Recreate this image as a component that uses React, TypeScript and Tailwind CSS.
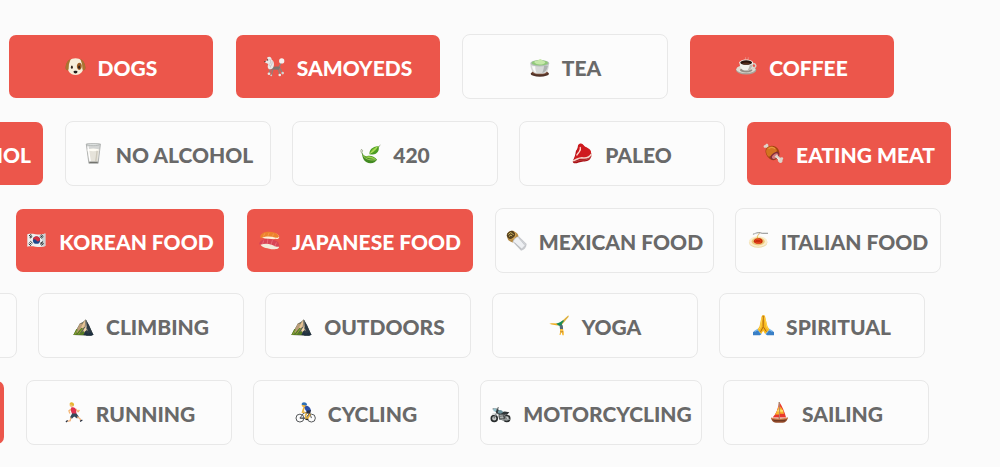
import React, { useState } from 'react';

interface IconProps {
  children: React.ReactNode;
}

const Icon: React.FC<IconProps> = ({ children }) => (
  <svg className="h-[21px] w-[21px] shrink-0" viewBox="0 0 64 64" fill="none" aria-hidden="true">
    {children}
  </svg>
);

const DogIcon = () => (
  <Icon>
    <path d="M17 10C8 12 1 28 2 38c2 7 10 7 13 1l6-24zM47 10c9 2 16 18 15 28-2 7-10 7-13 1l-6-24z" fill="#9c6227" />
    <path d="M32 7c-15 0-25 10-25 23 0 15 8 28 25 28s25-13 25-28C57 17 47 7 32 7z" fill="#f6efdb" />
    <path d="M17 10C8 12 1 28 2 38c1 6 7 7 9 2l1-15zM47 10c9 2 16 18 15 28-1 6-7 7-9 2l-1-15z" fill="#ab7330" />
    <path d="M38 24c4-6 12-5 13 4 1 9-4 16-9 14-5-2-8-11-4-18z" fill="#9a5a22" />
    <ellipse cx="21" cy="34" rx="3" ry="5" fill="#30241d" />
    <ellipse cx="43" cy="34" rx="3" ry="5" fill="#30241d" />
    <path d="M26 47c0-3 12-3 12 0 0 4-3 6-6 6s-6-2-6-6z" fill="#1d1b1b" />
  </Icon>
);

const PoodleIcon = () => (
  <Icon>
    <path d="M46 34l8-18M20 36l-4 18M27 38l-4 20M44 38l4 19M48 36l8 16" stroke="#8d817b" strokeWidth="4" />
    <path d="M22 30c8 5 18 0 27 4l-4 8-22-1z" fill="#7d7470" />
    <path d="M10 4c7-5 14 0 13 7 7 4 8 11 7 18-1 9-7 13-15 11-5-3-4-11-2-16L3 20l1-5 7-2z" fill="#e9e8e8" />
    <path d="M17 9c4 4 4 10 1 15m7-8c0 6-1 11-5 15M14 27c4 0 6 3 6 8" stroke="#b8b6b8" strokeWidth="2" />
    <circle cx="11" cy="12" r="2" fill="#312c2b" />
    <circle cx="3" cy="17" r="2" fill="#312c2b" />
    <circle cx="54" cy="15" r="8" fill="#f4f1f0" />
    <circle cx="15" cy="54" r="4" fill="#e7e4e2" />
    <circle cx="22" cy="59" r="3" fill="#cfcbc8" />
    <circle cx="48" cy="58" r="4" fill="#f0edeb" />
    <circle cx="57" cy="52" r="4" fill="#d6d1ce" />
  </Icon>
);

const TeaIcon = () => (
  <Icon>
    <ellipse cx="33" cy="54" rx="28" ry="9" fill="#513329" />
    <ellipse cx="33" cy="50" rx="24" ry="7" fill="#7a4c37" />
    <path d="M4 23c0 19 8 31 20 31h18c12 0 19-12 19-31z" fill="#d7d9d8" />
    <path d="M9 31c3 12 7 18 14 21-3-7-4-14-4-21z" fill="#fafafa" />
    <path d="M46 30c-1 9-3 16-6 22 9-1 15-9 18-22z" fill="#aeb2b2" />
    <ellipse cx="33" cy="22" rx="29" ry="10" fill="#b7bebd" />
    <ellipse cx="33" cy="21" rx="25" ry="8" fill="#91c97b" />
    <path d="M16 19c4-8 10-1 14-8 8-6 8 4 16 5 5 2 5 6-2 8-9 3-22 3-28-5z" fill="#c5e8a9" />
  </Icon>
);

const CoffeeIcon = () => (
  <Icon>
    <path d="M28 13c-3-4 4-5 1-9m8 9c-4-5 5-6 0-9" stroke="#e9aaa2" strokeWidth="2" />
    <ellipse cx="31" cy="43" rx="31" ry="13" fill="#aaa49b" />
    <ellipse cx="30" cy="40" rx="29" ry="12" fill="#dedbd2" />
    <ellipse cx="31" cy="43" rx="19" ry="7" fill="#958e85" />
    <path d="M49 25c11-6 15 7 7 11-4 3-9 4-12 3" stroke="#d4d0c9" strokeWidth="4" />
    <path d="M11 20c0 14 6 24 15 24h11c9 0 14-10 15-24z" fill="#f2f1ed" />
    <path d="M42 25c-1 9-4 16-8 19 9 1 15-8 17-19z" fill="#bbb6af" />
    <ellipse cx="31" cy="20" rx="21" ry="9" fill="#f4f2ed" />
    <ellipse cx="31" cy="20" rx="18" ry="7" fill="#27130d" />
    <path d="M18 23c7-4 19-4 26 0-7 4-19 4-26 0z" fill="#58301e" />
  </Icon>
);

const MilkIcon = () => (
  <Icon>
    <path d="M10 3h43l-7 59H18z" fill="#d3d5d4" stroke="#b0b2b1" strokeWidth="3" />
    <path d="M13 20h37l-6 36H20z" fill="#e6e3da" />
    <ellipse cx="31" cy="21" rx="18" ry="4" fill="#fffdf5" />
    <path d="M15 10l7 46" stroke="#fff" strokeWidth="4" />
    <path d="M43 24l-4 31" stroke="#cdc9bc" strokeWidth="4" />
    <ellipse cx="31" cy="5" rx="20" ry="3" fill="#e4e7e6" stroke="#a5aaa8" strokeWidth="2" />
    <path d="M19 59h26" stroke="#73736e" strokeWidth="4" />
  </Icon>
);

const LeafIcon = () => (
  <Icon>
    <path d="M54 15c5-3 4-7 8-9M8 34c-4-3-7-10-4-14 3-1 5 3 3 7" stroke="#7d8b65" strokeWidth="2" />
    <path d="M29 34c-1-13 7-22 27-25 5 12-3 26-17 26-4 1-7 0-10-1z" fill="#4b9c24" />
    <path d="M30 32c3-9 12-18 25-22-4 11-13 19-25 22z" fill="#92cf3f" />
    <path d="M6 27c0 20 8 35 26 35 10 0 16-6 20-11-8-11-22-14-31-11C13 41 8 36 6 27z" fill="#438b22" />
    <path d="M7 34c7 13 21 10 43 17-12-11-25-12-33-9z" fill="#9cd24c" />
    <path d="M10 40c10 11 23 13 38 11M31 32c8-6 14-11 22-21" stroke="#c5e47c" strokeWidth="2" />
  </Icon>
);

const SteakIcon = () => (
  <Icon>
    <path d="M22 4c8-4 12 2 17 8 10 5 22 12 20 27-1 12-12 19-25 17-12 1-25 10-30 4-5-5 4-14 5-21 3-8 1-14 6-19 4-5 1-13 7-16z" fill="#a80b12" />
    <path d="M22 3c8-4 12 2 17 8 10 5 23 10 18 23-5 9-18 11-28 10-9 1-16 10-20 7-4-5 2-12 4-18 2-6 0-9 4-14 3-5 0-13 5-16z" fill="#cf1a1e" />
    <path d="M25 12c2 6 1 10-3 15-3 4-6 7-8 11" stroke="#ffd9cf" strokeWidth="4" />
    <path d="M3 54c9-1 16-9 27-9 12 2 24-2 29-11" stroke="#f6d3c7" strokeWidth="5" />
    <path d="M5 57c8 2 16-6 26-5 13 1 23-4 27-11" stroke="#c7655d" strokeWidth="2" />
  </Icon>
);

const MeatIcon = () => (
  <Icon>
    <path d="M7 6c3-7 11-3 9 3l9 10-8 6-7-11C3 17-1 10 4 7z" fill="#dfd4c9" />
    <path d="M11 15c11-12 30-7 36 5 4 8 5 18-1 25-8 9-20 10-28 1C9 38 4 23 11 15z" fill="#a3430f" />
    <path d="M12 17c9-11 24-6 30 4 2 5-5 9-11 13-7 4-11 9-15 7-6-6-9-17-4-24z" fill="#d27420" />
    <path d="M17 18c7-7 15-5 20 0" stroke="#e8963f" strokeWidth="4" />
    <ellipse cx="36" cy="39" rx="15" ry="9" transform="rotate(-38 36 39)" fill="#852d37" />
    <ellipse cx="37" cy="40" rx="11" ry="6" transform="rotate(-38 37 40)" fill="#d57879" />
    <path d="M35 41l7-6 10 10c8-5 13 2 7 7 3 7-7 12-11 6-4-3-3-6-2-8z" fill="#dcd4cb" />
    <path d="M43 45l7 7" stroke="#fffaf1" strokeWidth="3" />
  </Icon>
);

const KoreaIcon = () => (
  <Icon>
    <path d="M4 13c18-5 35 6 55-2v38c-20 8-37-3-55 2z" fill="#edf1f1" />
    <path d="M49 14l10-3v38l-10 2z" fill="#cbd3d4" />
    <circle cx="32" cy="31" r="11" fill="#1b488c" />
    <path d="M21 30c0-15 22-15 22 0-3 6-8 7-11 2-3-4-8-5-11-2z" fill="#d23142" />
    <path d="M9 18l7-5m-5 9 7-5m-6 8 7-5M46 14l7 6m-9-3 7 6m-9-3 7 6M10 38l7 6m-9-2 7 6m-2-14 7 6M44 44l8-6m-6 9 8-6m-11 0 8-6" stroke="#303436" strokeWidth="3" />
  </Icon>
);

const SushiIcon = () => (
  <Icon>
    <path d="M7 17c6-12 47-11 53 0 5 9-3 12-9 10-15 5-31 0-42-4z" fill="#fff0d9" />
    <path d="M4 19C10 0 47 3 59 15c5 7-2 10-11 8-14-5-29-3-40 1-4 0-5-2-4-5z" fill="#ed812c" />
    <path d="M18 10l-5 10M31 8l-4 10M44 11l-3 10" stroke="#f7a55c" strokeWidth="2" />
    <path d="M4 39c10-8 48 0 57 12 1 8-16 9-30 6C17 55 2 50 4 39z" fill="#f3ecdc" />
    <path d="M1 41c2-18 44-20 58-3 6 12 2 15-8 12-14-7-29-12-47-5-3 0-4-2-3-4z" fill="#d84455" />
    <path d="M14 32l-3 11M27 28l-2 15M41 31l-5 15M53 38l-5 12" stroke="#ee7f83" strokeWidth="2" />
  </Icon>
);

const BurritoIcon = () => (
  <Icon>
    <path d="M5 20L23 5c10 1 15 7 15 16L21 38C10 36 2 28 5 20z" fill="#b68b45" />
    <path d="M3 17C2 7 14-1 24 3c9 4 9 15 2 22C16 33 4 27 3 17z" fill="#d7a757" />
    <ellipse cx="15" cy="15" rx="13" ry="11" transform="rotate(-38 15 15)" fill="#57411f" />
    <path d="M7 14l6-6 5 2M9 20l6-5 3 4m0-9 5 5" stroke="#d5c065" strokeWidth="3" />
    <path d="M20 36c3-9 9-15 19-17l24 24c-1 11-7 18-17 20z" fill="#c7c9cd" />
    <path d="M23 35c3-7 7-11 14-14l22 24-11 11z" fill="#eef0f3" />
    <path d="M38 23l20 24M27 39l19 20" stroke="#b2b5bb" strokeWidth="2" />
  </Icon>
);

const PastaIcon = () => (
  <Icon>
    <ellipse cx="31" cy="38" rx="28" ry="16" fill="#ecd9a8" />
    <ellipse cx="31" cy="35" rx="28" ry="16" fill="#faedcc" />
    <ellipse cx="31" cy="35" rx="20" ry="12" fill="#ecc878" />
    <path d="M17 35c2-9 9-11 16-10 8 0 14 6 11 12-3 7-24 7-27-2z" fill="#ca2c0b" />
    <path d="M22 31c4-4 14-4 16 1M23 37c4 4 12 3 16-1" stroke="#f25124" strokeWidth="3" />
    <path d="M29 25c-3-9 5-9 6-17" stroke="#e4b448" strokeWidth="3" />
    <path d="M15 13c15-6 19-6 28-3h18" stroke="#8a8b8a" strokeWidth="3" />
    <path d="M18 11l19 1" stroke="#d9d9d7" strokeWidth="2" />
  </Icon>
);

const MountainIcon = () => (
  <Icon>
    <path d="M1 61l20-35 9-5 9-7 10 18 13 28-9 3z" fill="#5f6352" />
    <path d="M35 21l4-7 10 17 13 29-21 3-7-17z" fill="#2d3a44" />
    <path d="M38 14L25 33 15 58l21-24z" fill="#e5c394" />
    <path d="M21 26L9 49 2 60l15-6 13-27z" fill="#b99c78" />
    <path d="M39 15l-3 23-10 20 17-13z" fill="#f1d5ac" />
    <path d="M40 17l-1 18 6 14" stroke="#6e706d" strokeWidth="3" />
    <path d="M1 61l9-18 4 1-4 14 16-19 4 1-9 18 11-10 4 13z" fill="#567c22" />
    <path d="M5 60l8-14m3 13 12-16" stroke="#91a43c" strokeWidth="3" />
    <path d="M31 61l7-9 9 6 7-6 9 8-7 3z" fill="#1f3040" />
  </Icon>
);

const CartwheelIcon = () => (
  <Icon>
    <path d="M1 27l7-2 23 1 3 3-8 3-18-3z" fill="#edae21" />
    <path d="M32 25L54 5l5-4 1 4-22 26z" fill="#deb03f" />
    <path d="M22 26c6-1 10-3 15-6l7-5 1 4-6 8 1 7-10-1z" fill="#158b58" />
    <path d="M32 31h10l1 14h-9z" fill="#556876" />
    <path d="M34 43h8l3 8 0 11h-4l-3-11-3 10h-3l2-11z" fill="#f6b72f" />
    <circle cx="38" cy="48" r="4" fill="#ffc648" />
    <path d="M35 50c2 2 5 2 7 0" stroke="#804d22" strokeWidth="2" />
  </Icon>
);

const PrayIcon = () => (
  <Icon>
    <path d="M0 52l14-8 12 14-5 4H0zM64 52l-14-8-12 14 5 4h21z" fill="#397fc6" />
    <path d="M5 50l10-6 9 12M59 50l-10-6-9 12" stroke="#79b8ed" strokeWidth="4" />
    <path d="M32 1c-5-2-6 4-7 9l-5 24-6 10 11 14 6-10 6 10 13-14-6-10-6-24c-1-5-1-11-6-9z" fill="#f8b91e" />
    <path d="M31 2v34l-8 15M32 37l9 14" stroke="#ac6512" strokeWidth="3" />
    <path d="M28 7l-5 30-5 7M36 8l6 29 5 7" stroke="#ffd24f" strokeWidth="3" />
  </Icon>
);

const RunnerIcon = () => (
  <Icon>
    <path d="M27 20l-9 7 3 8M39 21l7 9 4-6" stroke="#f4b574" strokeWidth="4" strokeLinejoin="round" />
    <path d="M25 17c7-3 13 0 15 7l1 13H28l-4-10z" fill="#df314e" />
    <circle cx="26" cy="9" r="6" fill="#f6bd73" />
    <path d="M20 7c1-8 12-8 14 1l-3 6-4-6z" fill="#e5b730" />
    <path d="M28 35h13l7 9-5 6-9-6-7 7-6-4z" fill="#344858" />
    <path d="M43 45l8 5 4 7M24 47l-2 10-9 2" stroke="#f1b27b" strokeWidth="4" />
    <path d="M52 59l7-4M14 56l-5 5" stroke="#283243" strokeWidth="4" />
  </Icon>
);

const CyclistIcon = () => (
  <Icon>
    <g stroke="#525557" strokeWidth="3">
      <circle cx="15" cy="49" r="12" />
      <circle cx="50" cy="49" r="12" />
      <path d="M15 49l12-16 18 0-13 17zM50 49L43 28M15 49h17" />
    </g>
    <path d="M28 16l-5 15 8 1M38 30l-6 11 2 12M42 28l3 12-8 12" stroke="#e8b341" strokeWidth="5" />
    <path d="M27 12c10-5 20 2 22 15l-12 6-6-10z" fill="#2a4fa8" />
    <path d="M37 26l12-1-3 11-12-2z" fill="#282e43" />
    <circle cx="27" cy="10" r="6" fill="#f1b541" />
    <path d="M20 8C21-2 34-1 37 8l-4 3z" fill="#2d6fb5" />
    <path d="M32 53h8" stroke="#242628" strokeWidth="4" />
  </Icon>
);

const MotorcycleIcon = () => (
  <Icon>
    <circle cx="13" cy="50" r="9" fill="#c6c9c8" stroke="#292d2e" strokeWidth="5" />
    <circle cx="51" cy="50" r="9" fill="#c6c9c8" stroke="#292d2e" strokeWidth="5" />
    <path d="M12 50l12-25M25 29l8 23h17l-8-16M8 21l14 1 4-6" stroke="#767b7c" strokeWidth="4" />
    <path d="M15 26l9-5 10 10 11-2 14 2-7 8H30l-9-4z" fill="#303638" />
    <path d="M24 27c6-4 13-3 16 4l-7 5-9-2z" fill="#69909b" />
    <path d="M25 39h17l3 13-17 2z" fill="#4c5050" />
    <path d="M29 42l11 1M30 48h11M6 38c7-5 16-3 20 5" stroke="#cfd3d2" strokeWidth="3" />
    <circle cx="15" cy="24" r="5" fill="#95c2cc" />
    <path d="M36 55l24-2" stroke="#999f9f" strokeWidth="4" />
  </Icon>
);

const SailIcon = () => (
  <Icon>
    <path d="M31 0v52" stroke="#815331" strokeWidth="3" />
    <path d="M29 4c-1 17-7 32-18 43h20zM33 2c8 12 15 29 19 45H33z" fill="#e8392c" />
    <path d="M29 15L24 28l-6 10h13V15zM34 13l7 9 5 14H34z" fill="#f8b52e" />
    <path d="M29 21l-5 8h7zM34 22l9 3 1 5H34z" fill="#ffe067" />
    <path d="M6 48c16 5 36 4 52-1-3 12-10 16-18 16H21C12 63 8 57 6 48z" fill="#984d2b" />
    <path d="M7 49c14 5 36 4 50 0" stroke="#dc8b54" strokeWidth="3" />
    <path d="M14 57h36" stroke="#653521" strokeWidth="3" />
  </Icon>
);

interface Interest {
  id: string;
  label?: string;
  icon?: React.FC;
  selected?: boolean;
  width?: string;
}

interface InterestRow {
  inset: string;
  items: Interest[];
}

// Food and drink first, then the activities
const groups: InterestRow[][] = [
  [
    {
      inset: 'pr-[105px]',
      items: [
        { id: 'dogs', label: 'DOGS', icon: DogIcon, selected: true },
        { id: 'samoyeds', label: 'SAMOYEDS', icon: PoodleIcon, selected: true },
        { id: 'tea', label: 'TEA', icon: TeaIcon },
        { id: 'coffee', label: 'COFFEE', icon: CoffeeIcon, selected: true },
      ],
    },
    {
      inset: 'pr-12',
      items: [
        { id: 'alcohol', label: 'ALCOHOL', selected: true, width: 'min-w-[206px] justify-end pr-3' },
        { id: 'no-alcohol', label: 'NO ALCOHOL', icon: MilkIcon },
        { id: '420', label: '420', icon: LeafIcon },
        { id: 'paleo', label: 'PALEO', icon: SteakIcon },
        { id: 'meat', label: 'EATING MEAT', icon: MeatIcon, selected: true },
      ],
    },
    {
      inset: 'pr-[59px]',
      items: [
        { id: 'korean', label: 'KOREAN FOOD', icon: KoreaIcon, selected: true, width: 'min-w-[210px] justify-center' },
        { id: 'japanese', label: 'JAPANESE FOOD', icon: SushiIcon, selected: true, width: 'min-w-[228px] justify-center' },
        { id: 'mexican', label: 'MEXICAN FOOD', icon: BurritoIcon, width: 'min-w-[219px] justify-center' },
        { id: 'italian', label: 'ITALIAN FOOD', icon: PastaIcon },
      ],
    },
  ],
  [
    {
      inset: 'pr-[75px]',
      items: [
        { id: 'activity-start' },
        { id: 'climbing', label: 'CLIMBING', icon: MountainIcon },
        { id: 'outdoors', label: 'OUTDOORS', icon: MountainIcon },
        { id: 'yoga', label: 'YOGA', icon: CartwheelIcon },
        { id: 'spiritual', label: 'SPIRITUAL', icon: PrayIcon },
      ],
    },
    {
      inset: 'pr-[71px]',
      items: [
        { id: 'sport-start', selected: true },
        { id: 'running', label: 'RUNNING', icon: RunnerIcon },
        { id: 'cycling', label: 'CYCLING', icon: CyclistIcon },
        { id: 'motorcycling', label: 'MOTORCYCLING', icon: MotorcycleIcon, width: 'min-w-[222px] justify-center' },
        { id: 'sailing', label: 'SAILING', icon: SailIcon },
      ],
    },
  ],
];

const InterestButton: React.FC<{ item: Interest }> = ({ item }) => {
  const [selected, setSelected] = useState(Boolean(item.selected));
  const ItemIcon = item.icon;
  const width = item.width ?? 'min-w-[206px] justify-center';
  const colors = selected
    ? 'border-transparent bg-[#ec564b] text-white'
    : 'border-[#e8e8e8] bg-[#fcfcfc] text-[#696969]';
  const className = `flex h-[65px] shrink-0 items-center gap-3 rounded-lg border bg-clip-padding px-2 text-[21px] leading-7 font-black whitespace-nowrap ${width} ${colors}`;

  if (!item.label) {
    return <div className={className} />;
  }

  return (
    <button type="button" aria-pressed={selected} onClick={() => setSelected(!selected)} className={className}>
      {ItemIcon && <ItemIcon />}
      <span className="pt-0.5">{item.label}</span>
    </button>
  );
};

const App: React.FC = () => {
  return (
    <main className="flex min-h-screen flex-col gap-5 overflow-hidden bg-[#fbfbfb] pt-[34px] font-['Lato',sans-serif]">
      {groups.map((rows, groupIndex) => (
        <section key={groupIndex} className="flex flex-col gap-[22px]">
          {rows.map((row) => (
            <div key={row.inset} className={`flex justify-end gap-[21px] ${row.inset}`}>
              {row.items.map((item) => (
                <InterestButton key={item.id} item={item} />
              ))}
            </div>
          ))}
        </section>
      ))}
    </main>
  );
};

export default App;
